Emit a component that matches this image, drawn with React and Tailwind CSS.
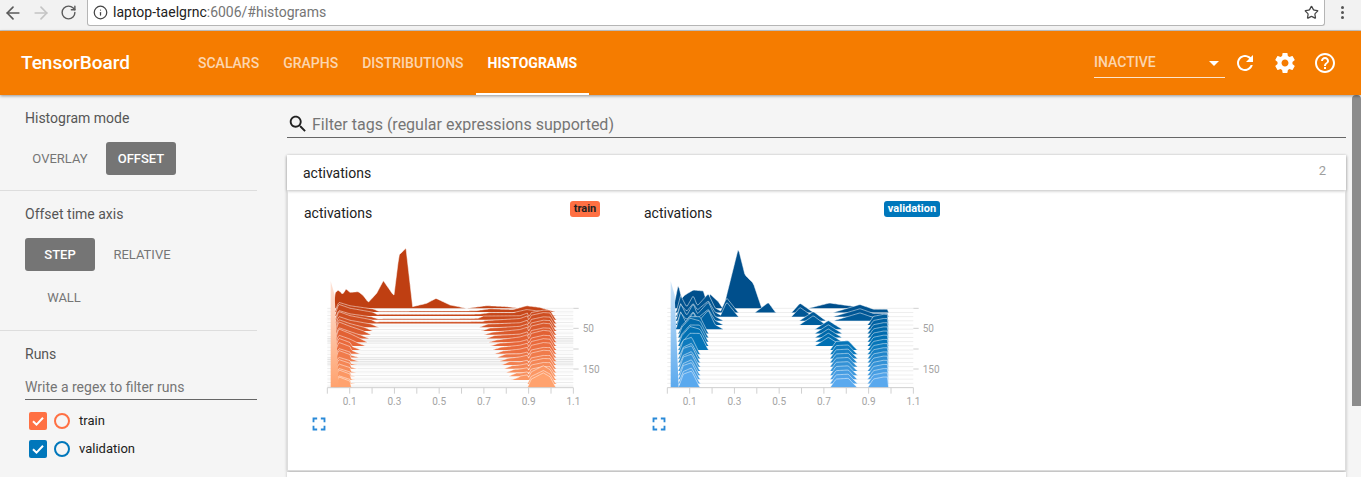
import React from 'react';
import { ArrowLeft, ArrowRight, RotateCw, Info, Star } from 'lucide-react';

const ICONS = {
  refresh: 'M17.65 6.35C16.2 4.9 14.21 4 12 4c-4.42 0-7.99 3.58-7.99 8s3.57 8 7.99 8c3.73 0 6.84-2.55 7.73-6h-2.08c-.82 2.33-3.04 4-5.65 4-3.31 0-6-2.69-6-6s2.69-6 6-6c1.66 0 3.14.69 4.22 1.78L13 11h7V4l-2.35 2.35z',
  settings: 'M19.43 12.98c.04-.32.07-.64.07-.98s-.03-.66-.07-.98l2.11-1.65c.19-.15.24-.42.12-.64l-2-3.46c-.12-.22-.39-.3-.61-.22l-2.49 1c-.52-.4-1.08-.73-1.69-.98l-.38-2.65C14.46 2.18 14.25 2 14 2h-4c-.25 0-.46.18-.49.42l-.38 2.65c-.61.25-1.17.59-1.69.98l-2.49-1c-.23-.09-.49 0-.61.22l-2 3.46c-.13.22-.07.49.12.64l2.11 1.65c-.04.32-.07.65-.07.98s.03.66.07.98l-2.11 1.65c-.19.15-.24.42-.12.64l2 3.46c.12.22.39.3.61.22l2.49-1c.52.4 1.08.73 1.69.98l.38 2.65c.03.24.24.42.49.42h4c.25 0 .46-.18.49-.42l.38-2.65c.61-.25 1.17-.59 1.69-.98l2.49 1c.23.09.49 0 .61-.22l2-3.46c.12-.22.07-.49-.12-.64l-2.11-1.65zM12 15.5c-1.93 0-3.5-1.57-3.5-3.5s1.57-3.5 3.5-3.5 3.5 1.57 3.5 3.5-1.57 3.5-3.5 3.5z',
  help: 'M11 18h2v-2h-2v2zm1-16C6.48 2 2 6.48 2 12s4.48 10 10 10 10-4.48 10-10S17.52 2 12 2zm0 18c-4.41 0-8-3.59-8-8s3.59-8 8-8 8 3.59 8 8-3.59 8-8 8zm0-14c-2.21 0-4 1.79-4 4h2c0-1.1.9-2 2-2s2 .9 2 2c0 2-3 1.75-3 5h2c0-2.25 3-2.5 3-5 0-2.21-1.79-4-4-4z',
  search: 'M15.5 14h-.79l-.28-.27C15.41 12.59 16 11.11 16 9.5 16 5.91 13.09 3 9.5 3S3 5.91 3 9.5 5.91 16 9.5 16c1.61 0 3.09-.59 4.23-1.57l.27.28v.79l5 4.99L20.49 19l-4.99-5zm-6 0C7.01 14 5 11.99 5 9.5S7.01 5 9.5 5 14 7.01 14 9.5 11.99 14 9.5 14z',
  expand: 'M7 14H5v5h5v-2H7v-3zm-2-4h2V7h3V5H5v5zm12 7h-3v2h5v-5h-2v3zM14 5v2h3v3h2V5h-5z',
};

const MaterialIcon = ({ name, className }) => (
  <svg viewBox="0 0 24 24" className={className} fill="currentColor">
    <path d={ICONS[name]} />
  </svg>
);

// piecewise linear, zero outside of the points
const interp = (pts, x) => {
  if (x < pts[0][0] || x > pts[pts.length - 1][0]) return 0;
  for (let i = 1; i < pts.length; i++) {
    if (x <= pts[i][0]) {
      const [x0, y0] = pts[i - 1];
      const [x1, y1] = pts[i];
      if (x1 === x0) return y1;
      return y0 + ((y1 - y0) * (x - x0)) / (x1 - x0);
    }
  }
  return 0;
};

const hexToRgb = (h) => [1, 3, 5].map((i) => parseInt(h.slice(i, i + 2), 16));
const mixColor = (stops, t) => {
  const p = t * (stops.length - 1);
  const i = Math.min(Math.floor(p), stops.length - 2);
  const a = hexToRgb(stops[i]);
  const b = hexToRgb(stops[i + 1]);
  const c = a.map((v, k) => Math.round(v + (b[k] - v) * (p - i)));
  return `rgb(${c[0]},${c[1]},${c[2]})`;
};

const jitter = (i, k = 1) => Math.sin(i * 12.9898 * k + 4.1) * 0.5 + Math.sin(i * 3.7 * k) * 0.5;

const trainBumps = (t, i) => {
  if (i === 0) {
    return [[[100, 0], [104, 45], [115, 55], [128, 42], [138, 58], [150, 48], [175, 50], [190, 38], [205, 18], [230, 45], [250, 83], [280, 40], [282, 40], [297, 160], [318, 180], [338, 5], [380, 15], [408, 30], [450, 10], [500, 0], [560, 8], [620, 5], [660, 0]]];
  }
  const r = t < 0.25 ? 245 - 40 * t : t < 0.5 ? 250 - 110 * t : 205 - 45 * t;
  const j = jitter(i);
  const bumps = [[[104, 0], [116, 36 + 8 * j - 8 * t], [150, 24 + 6 * j - 8 * t], [r - 24, 12 + 3 * j - 6 * t], [r, 0]]];
  if (t < 0.2) {
    // the dark band that runs nearly across the whole chart near the back
    bumps.push([[200, 0], [240, 5 + 3 * j], [500, 5 + 2 * j], [680, 8], [700, 0]]);
  }
  if (t < 0.12) {
    bumps.push([[500, 0], [570, 10], [640, 10 + 3 * j], [680, 19], [720, 14], [768, 0]]);
  } else {
    bumps.push([[682, 0], [694, 24 + 3 * j], [730, 32 + 4 * j + (t > 0.9 ? 10 : 0)], [750, 31 + 3 * j], [768, 0]]);
    if (t < 0.92) {
      const l = 505 + 140 * t;
      bumps.push([[l, 0], [l + 25, 9 - 2 * j], [660, 15 - 4 * t + 3 * j], [682, 24 - 10 * t + 3 * j], [690, 0]]);
    }
  }
  return bumps;
};

const validationBumps = (t, i) => {
  if (i === 0) {
    return [[[100, 0], [115, 72], [125, 30], [135, 40], [160, 55], [190, 52], [205, 5], [208, 45], [235, 20], [248, 0], [250, 0], [262, 48], [295, 180], [315, 100], [340, 75], [362, 10], [366, 0]], [[505, 0], [568, 16], [640, 6], [650, 0]]];
  }
  const j = jitter(i, 1.7);
  const bumps = [];
  if (t < 0.06) bumps.push([[345, 0], [385, 30], [407, 0]]);
  if (t < 0.12) bumps.push([[455, 0], [480, 28], [520, 0]]);
  else if (t < 0.22) bumps.push([[478, 0], [520, 28], [558, 0]]);
  else if (t < 0.5) bumps.push([[525, 0], [565, 26], [606, 0]]);
  else bumps.push([[570, 0], [588, 26], [625, 28], [652, 0]]);
  if (t < 0.16) bumps.push([[580, 0], [660, 24], [700, 10], [745, 10]]);
  else bumps.push([[683, 0], [700, 26], [730, 32], [745, 32]]);
  if (t < 0.3) {
    bumps.push([[108, 0], [122, 44 + 16 * j], [140, 16], [160, 46 + 12 * j], [172, 20], [205, 52 + 10 * j], [225, 14], [250, 0]]);
    if (t < 0.12) bumps.push([[240, 0], [260, 44], [295, 0]]);
  } else if (t < 0.55) {
    bumps.push([[115, 0], [125, 26 + 8 * j], [150, 54 + 8 * j], [180, 50], [205, 0]]);
  } else {
    bumps.push([[115, 0], [130, 38 + 10 * j], [155, 48 + 6 * j], [180, 0]]);
  }
  return bumps;
};

const TICKS = [0.1, 0.3, 0.5, 0.7, 0.9, 1.1];
const xGrid = Array.from({ length: 186 }, (_, i) => 82 + i * 4);

const HistogramChart = ({ bumps, count, stops, spike, gridLines, id }) => {
  const rows = Array.from({ length: count }, (_, i) => {
    const t = i / (count - 1);
    const base = 340 + 238 * t;
    const list = bumps(t, i);
    const heights = xGrid.map((x) => Math.max(...list.map((b) => interp(b, x))));
    const top = xGrid.map((x, k) => `${x},${(base - heights[k]).toFixed(1)}`).join(' ');
    const edge = xGrid
      .map((x, k) => {
        const next = k + 1;
        if (next >= xGrid.length || (heights[k] <= 0 && heights[next] <= 0)) return '';
        return `M${x} ${(base - heights[k]).toFixed(1)}L${xGrid[next]} ${(base - heights[next]).toFixed(1)}`;
      })
      .join('');
    return { i, t, base, top, edge };
  });

  return (
    <svg viewBox="0 120 930 525" className="ml-[12px] block h-[175px] w-[310px]">
      <defs>
        <linearGradient id={id} x1="0" y1="0" x2="0" y2="1">
          <stop offset="0" stopColor={spike[0]} />
          <stop offset="1" stopColor={spike[1]} />
        </linearGradient>
      </defs>
      {gridLines.map(([y, color], k) => (
        <line key={k} x1="82" x2="820" y1={y} y2={y} stroke={color} strokeWidth="3" />
      ))}
      {rows.map((r) => (
        <g key={r.i}>
          <polygon points={`82,${r.base} ${r.top} 822,${r.base}`} fill={mixColor(stops, r.t)} />
          <path d={r.edge} stroke="#ffffff" strokeOpacity="0.6" strokeWidth="2.5" fill="none" />
        </g>
      ))}
      <polygon points="92,578 92,258 104,300 116,578" fill={`url(#${id})`} />
      <line x1="82" x2="820" y1="578" y2="578" stroke="#d0d0d0" strokeWidth="3" />
      {Array.from({ length: 12 }, (_, i) => (
        <line key={i} x1={82 + i * 67.1} x2={82 + i * 67.1} y1="578" y2="596" stroke="#d0d0d0" strokeWidth="3" />
      ))}
      {[340, 400, 462, 522].map((y) => (
        <line key={y} x1="820" x2="836" y1={y} y2={y} stroke="#d0d0d0" strokeWidth="3" />
      ))}
      {TICKS.map((v, i) => (
        <text key={v} x={149 + i * 134.2} y="630" textAnchor="middle" fill="#a3a3a3" fontSize="30">
          {v.toFixed(1)}
        </text>
      ))}
      <text x="848" y="411" fill="#a3a3a3" fontSize="30">50</text>
      <text x="848" y="533" fill="#a3a3a3" fontSize="30">150</text>
    </svg>
  );
};

// the train chart has denser lines with two heavier grey bands
const trainGrid = Array.from({ length: 46 }, (_, i) => {
  const y = 340 + i * 5.3;
  const heavy = (y > 428 && y < 446) || (y > 488 && y < 512);
  return [y, heavy ? '#e2e2e2' : i % 2 ? '#fafafa' : '#ececec'];
});
const validationGrid = Array.from({ length: 20 }, (_, i) => [340 + i * 12.5, '#eeeeee']);

const ChartCard = ({ tag, tagClass, tagWidth, ...chart }) => (
  <div className="w-[340px]">
    <div className="flex h-[45px] items-start justify-between pl-[16px] pr-[28px]">
      <span className="mt-[14px] text-[14px] leading-[18px] text-[#212121]">activations</span>
      <span className={`mt-[11px] flex h-[16px] items-center justify-center rounded-[3px] text-[11px] font-bold ${tagClass} ${tagWidth}`}>
        {tag}
      </span>
    </div>
    <HistogramChart {...chart} />
    <MaterialIcon name="expand" className="ml-[20px] mt-[3px] h-[22px] w-[22px] text-[#2a8ad8]" />
  </div>
);

const ToggleButton = ({ label, active, className = '' }) => (
  <div
    className={`flex h-[33px] w-[70px] items-center justify-center rounded-[3px] text-[13px] ${
      active ? 'bg-[#757575] font-medium text-white' : 'text-[#757575]'
    } ${className}`}
  >
    {label}
  </div>
);

const RunRow = ({ name, boxClass, ringClass }) => (
  <div className="flex h-[28px] items-center pl-[4px]">
    <div className={`flex h-[18px] w-[18px] items-center justify-center rounded-[2px] ${boxClass}`}>
      <svg viewBox="0 0 18 18" className="h-[18px] w-[18px]" fill="none" stroke="#ffffff" strokeWidth="2">
        <path d="M4 9.2l3.5 3.4L14 5.8" />
      </svg>
    </div>
    <div className={`ml-[7px] h-[16px] w-[16px] rounded-full border-2 ${ringClass}`} />
    <span className="ml-[9px] text-[13px] text-[#212121]">{name}</span>
  </div>
);

const Sidebar = () => (
  <div className="w-[272px] shrink-0">
    <div className="w-[257px]">
      {/* Histogram mode */}
      <div className="border-b border-[#dddddd] pb-[15px] pl-[25px] pt-[13px]">
        <p className="text-[14px] leading-[20px] text-[#555555]">Histogram mode</p>
        <div className="mt-[14px] flex gap-[11px]">
          <ToggleButton label="OVERLAY" />
          <ToggleButton label="OFFSET" active />
        </div>
      </div>

      {/* Offset time axis */}
      <div className="border-b border-[#dddddd] pb-[16px] pl-[25px] pt-[13px]">
        <p className="text-[14px] leading-[20px] text-[#555555]">Offset time axis</p>
        <div className="mt-[14px] flex gap-[12px]">
          <ToggleButton label="STEP" active />
          <ToggleButton label="RELATIVE" />
        </div>
        <ToggleButton label="WALL" className="ml-[4px] mt-[10px]" />
      </div>

      {/* Runs */}
      <div className="pl-[25px] pt-[13px]">
        <p className="text-[14px] leading-[20px] text-[#555555]">Runs</p>
        <div className="mt-[12px] flex h-[24px] items-start border-b border-[#666666] pt-[1px] text-[14px] leading-[20px] text-[#757575]">
          Write a regex to filter runs
        </div>
        <div className="mt-[7px]">
          <RunRow name="train" boxClass="bg-[#ff7043]" ringClass="border-[#ff7043]" />
          <RunRow name="validation" boxClass="bg-[#0077bb]" ringClass="border-[#0077bb]" />
        </div>
      </div>
    </div>
  </div>
);

export default function App() {
  return (
    <div className="flex h-screen flex-col overflow-hidden bg-[#f5f5f5] [font-family:Roboto,sans-serif]">
      {/* Browser chrome */}
      <div className="flex h-[31px] shrink-0 items-start border-b border-[#c8c8c8] bg-[#f2f2f2]">
        <div className="flex h-[25px] w-[87px] items-center pl-[3px] text-[#5a5a5a]">
          <ArrowLeft className="h-[20px] w-[20px]" strokeWidth={2} />
          <ArrowRight className="ml-[8px] h-[20px] w-[20px] text-[#c4c4c4]" strokeWidth={2} />
          <RotateCw className="ml-[9px] h-[17px] w-[17px]" strokeWidth={2} />
        </div>
        <div className="flex h-[26px] w-[1238px] items-center rounded-b-[3px] border-x border-b border-[#b5b5b5] bg-white pl-[5px] pr-[5px]">
          <Info className="h-[15px] w-[15px] text-[#444444]" strokeWidth={2} />
          <span className="ml-[5px] text-[14px] text-[#222222]">laptop-taelgrnc</span>
          <span className="text-[14px] text-[#757575]">:6006/#histograms</span>
          <Star className="ml-auto h-[15px] w-[15px] text-[#444444]" strokeWidth={2} />
        </div>
        <div className="flex h-[25px] w-[36px] flex-col items-center justify-center gap-[2px] pr-[2px]">
          <span className="h-[3px] w-[3px] rounded-full bg-[#555555]" />
          <span className="h-[3px] w-[3px] rounded-full bg-[#555555]" />
          <span className="h-[3px] w-[3px] rounded-full bg-[#555555]" />
        </div>
      </div>

      {/* TensorBoard header */}
      <div className="z-10 flex h-[64px] shrink-0 items-center bg-[#f57c00] pl-[21px] shadow-[0_1px_3px_rgba(0,0,0,0.4)]">
        <span className="w-[109px] text-[19px] font-medium text-white">TensorBoard</span>
        <div className="ml-[56px] flex h-full items-stretch text-[14px] font-medium">
          <div className="flex items-center px-[12px] text-white/70">SCALARS</div>
          <div className="flex items-center px-[12px] text-white/70">GRAPHS</div>
          <div className="flex items-center px-[12px] text-white/70">DISTRIBUTIONS</div>
          <div className="flex items-center border-b-2 border-white px-[12px] pt-[2px] font-bold text-white">HISTOGRAMS</div>
        </div>
        <div className="ml-auto flex items-center pr-[24px]">
          <div className="mt-[1px] flex h-[29px] w-[131px] items-center justify-between border-b border-white/80 pb-[2px] pr-[6px] text-[14px] font-medium text-white/70">
            INACTIVE
            <span className="mt-[2px] h-0 w-0 border-x-[5px] border-t-[5px] border-x-transparent border-t-white" />
          </div>
          <div className="ml-[8px] flex gap-[16px] text-white">
            <MaterialIcon name="refresh" className="h-[24px] w-[24px]" />
            <MaterialIcon name="settings" className="h-[24px] w-[24px]" />
            <MaterialIcon name="help" className="h-[24px] w-[24px]" />
          </div>
        </div>
      </div>

      <div className="flex min-h-0 flex-1">
        <Sidebar />

        <div className="flex min-w-0 flex-1 flex-col pl-[15px]">
          {/* Filter */}
          <div className="mt-[16px] flex h-[27px] shrink-0 items-center border-b border-[#666666]">
            <MaterialIcon name="search" className="h-[22px] w-[22px] text-[#212121]" />
            <span className="ml-[3px] mt-[2px] text-[16px] text-[#757575]">Filter tags (regular expressions supported)</span>
          </div>

          {/* Category */}
          <div className="mt-[17px] bg-white shadow-[0_1px_3px_rgba(0,0,0,0.25)]">
            <div className="z-10 flex h-[35px] items-center justify-between pl-[16px] pr-[20px] shadow-[0_1px_3px_rgba(0,0,0,0.25)]">
              <span className="pt-[2px] text-[14px] text-[#212121]">activations</span>
              <span className="pb-[4px] text-[13px] text-[#9e9e9e]">2</span>
            </div>
            <div className="flex h-[281px] border-x border-b border-[#dddddd]">
              <ChartCard
                tag="train"
                tagClass="bg-[#ff7043] text-[#212121]"
                tagWidth="w-[30px]"
                id="trainSpike"
                bumps={trainBumps}
                count={22}
                stops={['#bf3f12', '#e8673a', '#ffa26e']}
                spike={['#fde3d8', '#ffa26e']}
                gridLines={trainGrid}
              />
              <ChartCard
                tag="validation"
                tagClass="bg-[#0077bb] text-white"
                tagWidth="w-[56px]"
                id="validationSpike"
                bumps={validationBumps}
                count={20}
                stops={['#004f8c', '#0072b5', '#5aa9ee']}
                spike={['#cfe4f7', '#5aa9ee']}
                gridLines={validationGrid}
              />
            </div>
          </div>
          <div className="mt-[1px] h-[20px] bg-white shadow-[0_1px_3px_rgba(0,0,0,0.25)]" />
        </div>

        {/* Scrollbar */}
        <div className="flex w-[15px] shrink-0 justify-end">
          <div className="h-[311px] w-[9px] rounded-t-[4px] bg-[#8c8c8c]" />
        </div>
      </div>
    </div>
  );
}
